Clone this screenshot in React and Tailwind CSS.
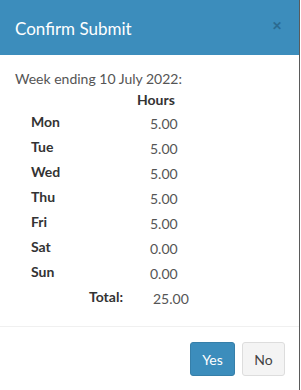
import React from "react";

const days = [
  { day: "Mon", hours: "5.00" },
  { day: "Tue", hours: "5.00" },
  { day: "Wed", hours: "5.00" },
  { day: "Thu", hours: "5.00" },
  { day: "Fri", hours: "5.00" },
  { day: "Sat", hours: "0.00" },
  { day: "Sun", hours: "0.00" },
];

function DayRow({ day, hours }) {
  return (
    <div className="flex h-[25px] items-center text-[14px]">
      <div className="w-[108px] pl-[16px] font-bold text-[#333] pb-[4px]">{day}</div>
      <div className="pl-[27px] text-[#555] pt-[1px]">{hours}</div>
    </div>
  );
}

export default function App() {
  return (
    <div className="w-[301px] h-[390px] bg-white" style={{ fontFamily: "Lato, 'Liberation Sans', sans-serif" }}>
      <div className="w-[300px] h-full border-r border-[#5a5a5a] flex flex-col">
        {/* header */}
        <div className="h-[55px] bg-[#3c8dbc] flex items-center justify-between pl-[15px] pr-[17px]">
          <div className="text-white text-[17px] pt-[2px]">Confirm Submit</div>
          <button className="text-[#2b6b91] text-[12px] font-bold leading-none pb-[4px]">✕</button>
        </div>

        {/* body */}
        <div className="px-[15px] pt-[14px] text-[14px] leading-[20px]">
          <div className="text-[#555]">Week ending 10 July 2022:</div>
          <div className="flex h-[20px] items-center pt-[1px]">
            <div className="w-[122px]" />
            <div className="font-bold text-[#333]">Hours</div>
          </div>
          <div className="pt-[2px]">
            {days.map((d) => (
              <DayRow key={d.day} day={d.day} hours={d.hours} />
            ))}
            <div className="flex h-[25px] items-center">
              <div className="w-[108px] text-right font-bold text-[#333] pb-[4px]">Total:</div>
              <div className="pl-[30px] text-[#555] pt-[1px]">25.00</div>
            </div>
          </div>
        </div>

        {/* footer */}
        <div className="mt-auto border-t border-[#f0f0f0] h-[64px] flex items-start justify-end gap-[7px] pt-[15px] pr-[14px]">
          <button className="w-[45px] h-[34px] rounded-[3px] bg-[#3c8dbc] border border-[#367fa9] text-white text-[14px]">Yes</button>
          <button className="w-[43px] h-[34px] rounded-[3px] bg-[#f4f4f4] border border-[#ddd] text-[#444] text-[14px]">No</button>
        </div>
      </div>
    </div>
  );
}
